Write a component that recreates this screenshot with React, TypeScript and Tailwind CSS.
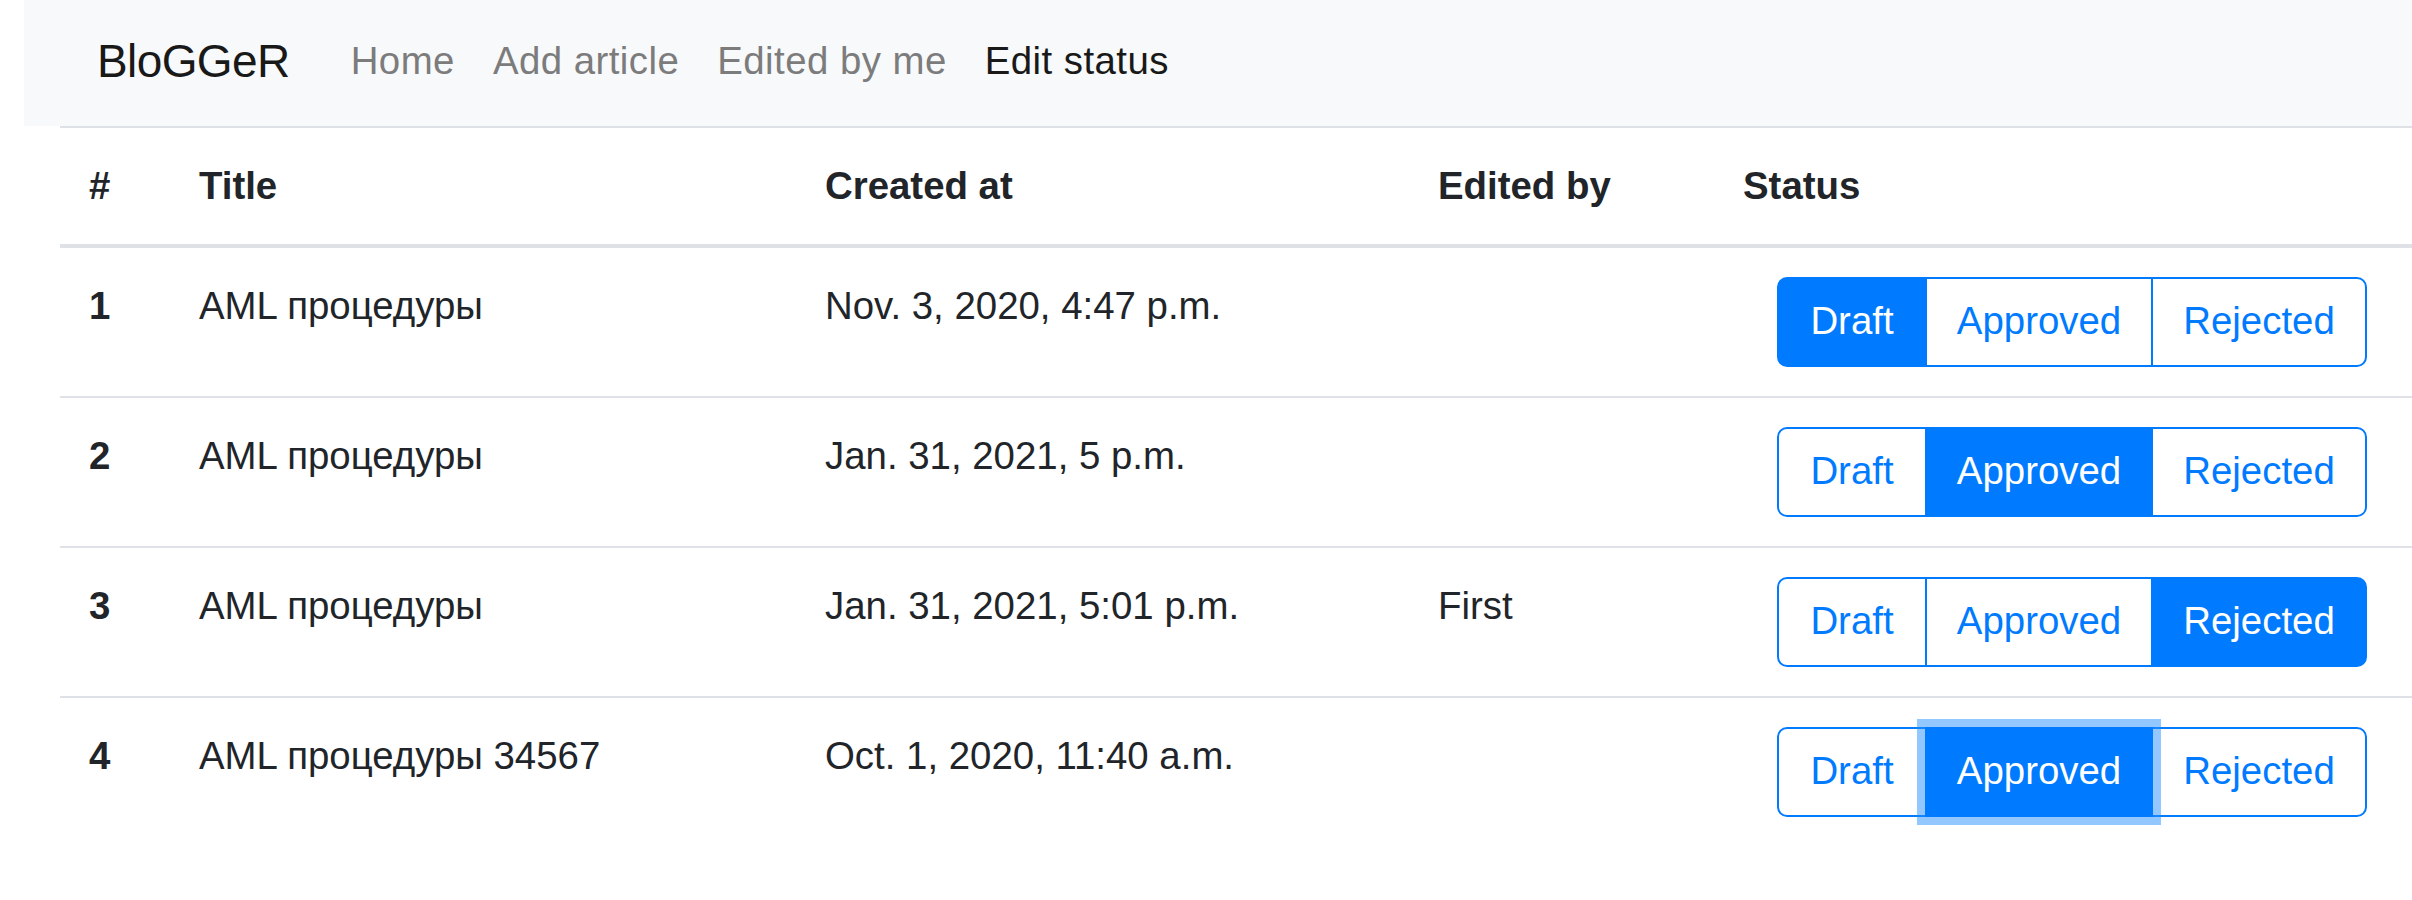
import React from "react";

type Status = "Draft" | "Approved" | "Rejected";

const rows: {
  id: number;
  title: string;
  created: string;
  editedBy: string;
  status: Status;
  focused?: boolean;
}[] = [
  { id: 1, title: "AML процедуры", created: "Nov. 3, 2020, 4:47 p.m.", editedBy: "", status: "Draft" },
  { id: 2, title: "AML процедуры", created: "Jan. 31, 2021, 5 p.m.", editedBy: "", status: "Approved" },
  { id: 3, title: "AML процедуры", created: "Jan. 31, 2021, 5:01 p.m.", editedBy: "First", status: "Rejected" },
  { id: 4, title: "AML процедуры 34567", created: "Oct. 1, 2020, 11:40 a.m.", editedBy: "", status: "Approved", focused: true },
];

function StatusGroup({ status, focused }: { status: Status; focused?: boolean }) {
  const base =
    "h-[90px] border-2 border-[#007bff] flex items-center justify-center text-[38.4px] leading-none";
  const look = (s: Status) =>
    s === status
      ? `bg-[#007bff] text-white relative ${focused ? "z-[2] shadow-[0_0_0_8px_rgba(38,143,255,0.5)]" : "z-[1]"}`
      : "bg-white text-[#007bff]";

  return (
    <div className="flex ml-[34px]">
      <button className={`${base} w-[150px] rounded-l-[10px] ${look("Draft")}`}>Draft</button>
      <button className={`${base} w-[228px] -ml-[2px] ${look("Approved")}`}>Approved</button>
      <button className={`${base} w-[216px] -ml-[2px] rounded-r-[10px] ${look("Rejected")}`}>Rejected</button>
    </div>
  );
}

export default function App() {
  const links = ["Home", "Add article", "Edited by me", "Edit status"];

  return (
    <div className="min-h-[900px] bg-white text-[#212529] font-['Liberation_Sans',Arial,sans-serif]">
      {/* NAVBAR */}
      <nav className="ml-[24px] h-[126px] bg-[#f8f9fa] flex items-center pl-[73px] pb-[4px]">
        <span className="text-[46px] tracking-[-0.6px] leading-[1.5] text-[#191919] mr-[42px]">
          BloGGeR
        </span>
        <div className="flex">
          {links.map((l) => (
            <span
              key={l}
              className={`px-[19px] text-[38.4px] tracking-[0.45px] leading-[1.5] ${
                l === "Edit status" ? "text-[#191919]" : "text-[#7c7c7d]"
              }`}
            >
              {l}
            </span>
          ))}
        </div>
      </nav>

      {/* TABLE */}
      <div className="pl-[60px]">
        <table className="w-full table-fixed border-collapse text-[38.4px] leading-[1.5] text-left">
          <colgroup>
            <col className="w-[110px]" />
            <col className="w-[626px]" />
            <col className="w-[613px]" />
            <col className="w-[305px]" />
            <col />
          </colgroup>
          <thead>
            <tr className="border-t-2 border-b-4 border-[#dee2e6]">
              <th className="py-[29px] px-[29px] font-bold align-top">#</th>
              <th className="py-[29px] px-[29px] font-bold align-top">Title</th>
              <th className="py-[29px] px-[29px] font-bold align-top">Created at</th>
              <th className="py-[29px] px-[29px] font-bold align-top">Edited by</th>
              <th className="py-[29px] px-[29px] font-bold align-top">Status</th>
            </tr>
          </thead>
          <tbody>
            {rows.map((r, i) => (
              <tr key={r.id} className={i > 0 ? "border-t-2 border-[#dee2e6]" : ""}>
                <td className="py-[29px] px-[29px] font-bold align-top">{r.id}</td>
                <td className="py-[29px] px-[29px] align-top">{r.title}</td>
                <td className="py-[29px] px-[29px] align-top">{r.created}</td>
                <td className="py-[29px] px-[29px] align-top">{r.editedBy}</td>
                <td className="py-[29px] px-[29px] align-top">
                  <StatusGroup status={r.status} focused={r.focused} />
                </td>
              </tr>
            ))}
          </tbody>
        </table>
      </div>
    </div>
  );
}
